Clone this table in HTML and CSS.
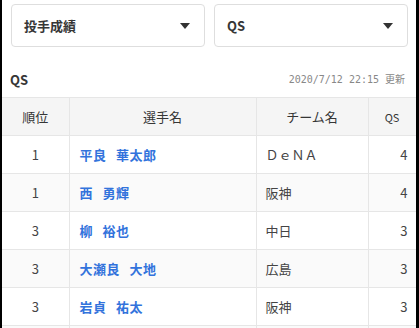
FILE: index.html
```html
<!DOCTYPE html>
<html lang="ja">
<head>
<meta charset="utf-8">
<link rel="stylesheet" href="styles.css">
</head>
<body>
<div class="page">
  <div class="selects">
    <div class="select"><span class="select-label">投手成績</span><span class="caret"></span></div>
    <div class="select"><span class="select-label">QS</span><span class="caret"></span></div>
  </div>
  <div class="caption">
    <span class="title">QS</span>
    <span class="updated">2020/7/12 22:15 更新</span>
  </div>
  <table class="ranking">
    <colgroup><col class="c-rank"><col class="c-name"><col class="c-team"><col class="c-val"></colgroup>
    <thead>
      <tr><th>順位</th><th>選手名</th><th>チーム名</th><th>QS</th></tr>
    </thead>
    <tbody>
      <tr><td class="rank">1</td><td class="name">平良 華太郎</td><td class="team">ＤｅＮＡ</td><td class="val">4</td></tr>
      <tr class="alt"><td class="rank">1</td><td class="name">西 勇輝</td><td class="team">阪神</td><td class="val">4</td></tr>
      <tr><td class="rank">3</td><td class="name">柳 裕也</td><td class="team">中日</td><td class="val">3</td></tr>
      <tr class="alt"><td class="rank">3</td><td class="name">大瀬良 大地</td><td class="team">広島</td><td class="val">3</td></tr>
      <tr><td class="rank">3</td><td class="name">岩貞 祐太</td><td class="team">阪神</td><td class="val">3</td></tr>
      <tr class="alt"><td class="rank">3</td><td class="name">今永 昇太</td><td class="team">ＤｅＮＡ</td><td class="val">3</td></tr>
    </tbody>
  </table>
</div>
</body>
</html>
```
FILE: styles.css
```css
html, body {
  margin: 0;
  padding: 0;
  background: #000;
  height: 100%;
  overflow: hidden;
}
.page {
  margin: 0 3px 0 2px;
  background: #fff;
  height: 100%;
  overflow: hidden;
  font-family: "Noto Sans CJK JP", "DejaVu Sans", sans-serif;
  color: #363636;
}
.selects {
  display: grid;
  grid-template-columns: 1fr 1fr;
  column-gap: 9px;
  padding: 4px 8px 0 9px;
}
.select {
  box-sizing: border-box;
  height: 43px;
  border: 1px solid #dedede;
  border-radius: 4px;
  display: flex;
  align-items: center;
  justify-content: space-between;
  padding: 0 14px 0 12px;
}
.select-label {
  font-size: 13px;
  font-weight: bold;
  color: #363636;
}
.caret {
  width: 0;
  height: 0;
  border-left: 5px solid transparent;
  border-right: 5px solid transparent;
  border-top: 6px solid #333;
}
.caption {
  box-sizing: border-box;
  height: 50px;
  padding: 16px 11px 0 8px;
  display: flex;
  align-items: center;
  justify-content: space-between;
}
.caption > span {
  line-height: 34px;
}
.title {
  font-size: 13px;
  font-weight: bold;
  color: #363636;
}
.updated {
  font-family: "DejaVu Sans Mono", "Noto Sans CJK JP", monospace;
  font-size: 10px;
  color: #888;
}
.ranking {
  width: 100%;
  table-layout: fixed;
  border-collapse: collapse;
  font-size: 13px;
}
.c-rank { width: 67px; }
.c-name { width: 187px; }
.c-team { width: 112px; }
.c-val { width: 48px; }
.ranking th,
.ranking td {
  height: 38px;
  box-sizing: border-box;
  border: 1px solid #e6e6e6;
  padding: 0 8px;
  vertical-align: middle;
}
.ranking th:first-child,
.ranking td:first-child { border-left: 0; }
.ranking th {
  background: #f5f5f5;
  font-weight: normal;
  color: #363636;
  text-align: center;
}
.ranking th:last-child { font-size: 11px; }
.ranking tr.alt td { background: #fafafa; }
.rank { text-align: center; color: #444; }
.name {
  color: #3273dc;
  font-weight: bold;
  padding-left: 10px !important;
  letter-spacing: 0.5px;
  word-spacing: 6px;
}
.team { color: #444; padding-left: 9px !important; }
.val { text-align: right; color: #444; }
```
